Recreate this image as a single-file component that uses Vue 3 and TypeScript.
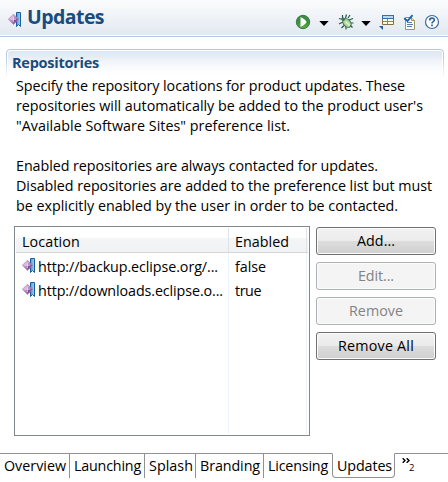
<script setup lang="ts">
import type { Directive } from 'vue'

interface Line { text: string; width: number }
interface Row { location: string; width: number; enabled: string; enabledWidth: number }
interface Action { label: string; width: number; disabled: boolean }
interface Tab { label: string; width: number; size: number; active?: boolean }

// Tracks a label so that it fills the given pixel width.
const vFit: Directive<HTMLElement, number> = {
  mounted(el, { value }) {
    const length = (el.textContent ?? '').length
    const natural = el.getBoundingClientRect().width
    el.style.letterSpacing = `${(value - natural) / length}px`
  },
}

const lines: Line[] = [
  { text: 'Specify the repository locations for product updates. These', width: 389 },
  { text: "repositories will automatically be added to the product user's", width: 407 },
  { text: '"Available Software Sites" preference list.', width: 274 },
  { text: '', width: 0 },
  { text: 'Enabled repositories are always contacted for updates.', width: 362 },
  { text: 'Disabled repositories are added to the preference list but must', width: 416 },
  { text: 'be explicitly enabled by the user in order to be contacted.', width: 382 },
]
const rows: Row[] = [
  { location: 'http://backup.eclipse.org/...', width: 180, enabled: 'false', enabledWidth: 31 },
  { location: 'http://downloads.eclipse.o...', width: 185, enabled: 'true', enabledWidth: 26 },
]
const actions: Action[] = [
  { label: 'Add...', width: 38, disabled: false },
  { label: 'Edit...', width: 36, disabled: true },
  { label: 'Remove', width: 54, disabled: true },
  { label: 'Remove All', width: 76, disabled: false },
]
const tabs: Tab[] = [
  { label: 'Overview', width: 62, size: 70 },
  { label: 'Launching', width: 67, size: 75 },
  { label: 'Splash', width: 44, size: 51 },
  { label: 'Branding', width: 60, size: 68 },
  { label: 'Licensing', width: 60, size: 68 },
  { label: 'Updates', width: 55, size: 63, active: true },
]
</script>

<template>
  <main class="editor">
    <svg class="defs" width="0" height="0" aria-hidden="true">
      <defs>
        <linearGradient id="gem" x1="0" y1="0" x2="1" y2="1">
          <stop offset="0" stop-color="#ead8f0" /><stop offset=".5" stop-color="#b98bc8" /><stop offset="1" stop-color="#75458f" />
        </linearGradient>
        <linearGradient id="ribbon" x1="0" y1="0" x2="1" y2="0">
          <stop offset="0" stop-color="#4d94d6" /><stop offset="1" stop-color="#a9d3f5" />
        </linearGradient>
        <linearGradient id="run" x1="0" y1="0" x2="0" y2="1">
          <stop offset="0" stop-color="#3f8b48" /><stop offset=".5" stop-color="#3d8c3d" /><stop offset="1" stop-color="#66ad45" />
        </linearGradient>
        <symbol id="repo" viewBox="0 0 14 16">
          <path d="M8.500.5h4v14l-2-2-2 2z" fill="url(#ribbon)" stroke="#17609f" />
          <path d="M5.500 2.200 10.600 7.300 5.500 12.400.4 7.300z" fill="url(#gem)" stroke="#a27caf" stroke-width=".7" />
          <path d="M5.500 2.800v4.500H1z" fill="#d9bade" /><path d="M5.500 7.300H10l-4.500 4.500z" fill="#7c5097" />
          <path d="M3 7.300h5M5.500 5v5" stroke="#ecd8ef" stroke-width=".7" />
        </symbol>
      </defs>
    </svg>

    <header class="header">
      <svg class="header-icon" width="14" height="16"><use href="#repo" /></svg>
      <h1 class="title"><span v-fit="77">Updates</span></h1>
      <div class="tools">
        <svg class="run" width="16" height="16" viewBox="0 0 16 16">
          <circle cx="8" cy="8" r="6.700" fill="url(#run)" stroke="#378044" />
          <path d="M5.500 3.300C8 4 10.800 6.300 11.600 8c-.9 1.800-3.500 4-6.100 4.700z" fill="#fbfdf8" />
        </svg>
        <svg class="arrow" width="10" height="5" viewBox="0 0 10 5"><path d="M.3 0h9.400L5 5z" fill="#000" /></svg>
        <svg class="bug" width="16" height="16" viewBox="0 0 16 16">
          <path d="M4.500 1v4M8.500.5 7.500 4M1 4.500l4 1M1 10l4-2M3.500 14 6 11.500M8 15.500V12M10 4l2-3M11 6l4-1.500M12 9h3.500M12 11l2.500 2.500" fill="none" stroke="#245a4a" stroke-width="1.200" />
          <ellipse cx="9" cy="9" rx="3.500" ry="4.800" transform="rotate(-42 9 9)" fill="#b5d59a" stroke="#34785a" stroke-width="1.100" />
          <circle cx="5.300" cy="5.200" r="1.800" fill="#3d7759" />
          <path d="m7.500 7.500 4 4" stroke="#e8f5d8" stroke-width="1.200" />
        </svg>
        <svg class="arrow" width="10" height="5" viewBox="0 0 10 5"><path d="M.3 0h9.400L5 5z" fill="#000" /></svg>
        <svg class="layout" width="16" height="16" viewBox="0 0 16 16">
          <path d="M3.500 1.500h11v9h-11z" fill="#fff9df" stroke="#866c42" />
          <path d="M3 1h12v4H3z" fill="#3570a9" /><path d="M4 2h10v2H4z" fill="#b6d9ee" />
          <path d="M8.500 5v5.500M4 7.500h10" stroke="#9b8254" />
          <path d="M0 12h4v4z" fill="#245e9c" />
        </svg>
        <svg class="check" width="14" height="16" viewBox="0 0 14 16">
          <path d="M2.500 3.500h6l3 3v9h-9z" fill="#fffdf1" stroke="#a39164" />
          <path d="M8.500 3.500v3h3" fill="#eadfb8" stroke="#a39164" />
          <path d="M4 8.500h5M4 10.500h6M4 12.500h5" stroke="#537faa" />
          <path d="M1.200 4.200 4.500 7 9.500 1.200" fill="none" stroke="#1262ac" stroke-width="1.800" />
        </svg>
        <svg class="help" width="16" height="16" viewBox="0 0 16 16">
          <circle cx="8" cy="8" r="6.500" fill="#fff" stroke="#376b9f" stroke-width="1.200" />
          <path d="M5.700 6.400C5.700 3.500 10.300 3.400 10.300 6c0 1.700-2.300 1.700-2.300 3.500" fill="none" stroke="#31669b" stroke-width="1.700" />
          <path d="M7.100 10.500h1.800v1.700H7.100z" fill="#31669b" />
        </svg>
      </div>
    </header>

    <section class="section">
      <h2 class="section-title"><span v-fit="87">Repositories</span></h2>
      <div class="description">
        <div v-for="(line, i) in lines" :key="i" class="line"><span v-if="line.text" v-fit="line.width">{{ line.text }}</span></div>
      </div>
      <div class="content">
        <div class="table">
          <div class="table-head">
            <div class="location"><span v-fit="58">Location</span></div>
            <div class="enabled"><span v-fit="54">Enabled</span></div>
          </div>
          <div class="table-body">
            <div class="column location-column">
              <div v-for="row in rows" :key="row.location" class="cell">
                <svg width="14" height="16"><use href="#repo" /></svg>
                <span v-fit="row.width">{{ row.location }}</span>
              </div>
            </div>
            <div class="column enabled-column">
              <div v-for="row in rows" :key="row.location" class="cell"><span v-fit="row.enabledWidth">{{ row.enabled }}</span></div>
            </div>
          </div>
        </div>
        <div class="actions">
          <button v-for="action in actions" :key="action.label" class="button" :disabled="action.disabled">
            <span v-fit="action.width">{{ action.label }}</span>
          </button>
        </div>
      </div>
    </section>

    <nav class="tabs">
      <div v-for="tab in tabs" :key="tab.label" class="tab" :class="{ active: tab.active }" :style="{ width: `${tab.size}px` }">
        <span v-fit="tab.width">{{ tab.label }}</span>
      </div>
      <div class="more">
        <svg width="8" height="5" viewBox="0 0 8 5"><path d="m.7.2 2.300 2.300L.7 4.800M4.700.2 7 2.500 4.700 4.800" fill="none" stroke="#000" stroke-width="1.400" /></svg>
        <span class="count">2</span>
      </div>
    </nav>
  </main>
</template>

<style>
body { margin: 0; background: #fff; }
</style>

<style scoped>
* { box-sizing: border-box; }
.editor { isolation: isolate; width: 448px; height: 482px; overflow: hidden; display: flex; flex-direction: column; background: #fff; color: #000; font: 14.3px/20px "Open Sans", "Noto Sans", sans-serif; white-space: nowrap; }
.defs { position: absolute; }
.header { height: 37px; flex: none; display: flex; padding-left: 8px; border-bottom: 1px solid #b3c7de; box-shadow: inset 0 -1px #fff; background: linear-gradient(#fbfcfd, #e2e8f1); }
.header-icon { margin-top: 12px; }
.title { margin: 4px 0 0 5px; width: 90px; font-size: 19.5px; line-height: 26px; font-weight: 700; color: #194c7f; }
.tools { flex: 1; display: flex; align-items: flex-start; padding: 14px 0 0 178px; }
.tools svg { flex: none; }
.tools .arrow { margin-top: 7px; }
.run + .arrow { margin-left: 8px; }
.bug { margin-left: 9px; }
.bug + .arrow { margin-left: 7px; }
.layout { margin-left: 8px; }
.check { margin-left: 8px; }
.help { margin-left: 7px; }
.section { position: relative; margin: 12px 4px 0 6px; height: 404px; flex: none; }
.section::before { content: ""; position: absolute; z-index: -1; inset: 0 0 auto; height: 28px; border: 1px solid #b6c9df; border-bottom: 0; border-radius: 4px 4px 0 0; box-shadow: inset 1px 1px #fff, inset -1px 0 #fff; background: linear-gradient(#dfe6f0, #fff); mask-image: linear-gradient(#000 25%, transparent); }
.section-title { margin: 0; padding: 4px 0 0 6px; height: 27px; font-size: 14.5px; line-height: 20px; font-weight: 700; color: #194c7f; }
.description { padding-left: 10px; height: 150px; }
.line { height: 20px; }
.content { display: flex; padding-left: 8px; }
.table { width: 296px; height: 210px; border: 1px solid #828790; padding: 1px; background: #fff; }
.table-head { display: flex; height: 25px; border-bottom: 1px solid #d5d5d5; background: linear-gradient(#fff 40%, #f4f5f7 42%, #f0f2f4); }
.location { width: 213px; padding: 4px 0 0 6px; border-right: 1px solid #e0e3e6; }
.enabled { width: 78px; padding: 4px 0 0 6px; border-right: 1px solid #e0e3e6; }
.table-body { display: flex; height: 181px; }
.column { border-right: 1px solid #edf3fc; padding-top: 2px; }
.location-column { width: 213px; padding-left: 6px; }
.enabled-column { width: 78px; padding-left: 6px; }
.cell { display: flex; height: 24px; line-height: 24px; }
.cell svg { margin: 3px 2px 0 0; flex: none; }
.actions { display: flex; flex-direction: column; gap: 7px; margin: 1px 0 0 6px; }
.button { width: 120px; height: 28px; padding: 0; border: 1px solid #707070; border-radius: 3px; box-shadow: inset 0 0 0 1px #fcfcfc; background: linear-gradient(#f2f2f2, #ebebeb 49%, #dddddd 50%, #cfcfcf); color: #000; font: inherit; line-height: 24px; }
.button:disabled { color: #838383; border-color: #adb2b5; background: #f4f4f4; }
.tabs { display: flex; height: 29px; flex: none; }
.tab { flex: none; height: 25px; padding-left: 4px; padding-top: 2px; border-top: 1px solid #919191; border-right: 1px solid #919191; }
.tab:nth-last-child(3) { border-right: 0; }
.tab.active { border: 1px solid #919191; border-top-color: transparent; border-radius: 0 0 4px 4px; background: #fff; }
.more { position: relative; flex: 1; border-top: 1px solid #919191; height: 25px; padding: 4px 0 0 7px; }
.more svg { display: block; }
.count { position: absolute; left: 14px; top: 7px; font-size: 9.5px; line-height: 14px; }
</style>
